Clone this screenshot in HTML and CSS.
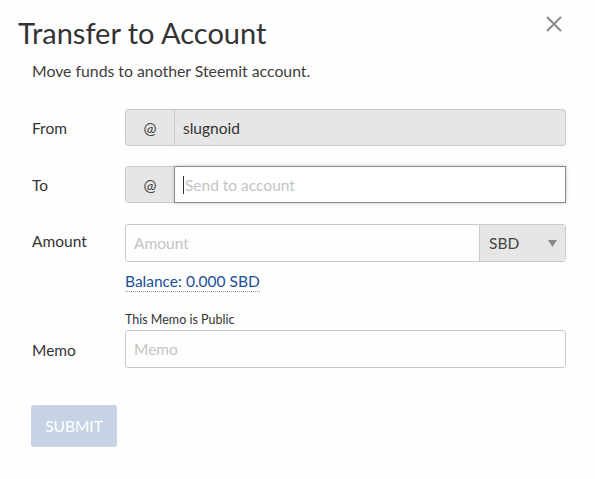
FILE: index.html
```html
<!DOCTYPE html>
<html>
<head>
<meta charset="utf-8">
<link rel="stylesheet" href="styles.css">
</head>
<body>
<div class="modal">
  <button class="close" aria-label="Close">
    <svg width="16" height="16" viewBox="0 0 16 16"><path d="M1 1 L15 15 M15 1 L1 15" stroke="#8a8a8a" stroke-width="2" fill="none"/></svg>
  </button>
  <h1 class="title">Transfer to Account</h1>
  <p class="subtitle">Move funds to another Steemit account.</p>
  <form class="form">
    <div class="row">
      <label class="label">From</label>
      <div class="group disabled">
        <span class="addon">@</span>
        <span class="field value">slugnoid</span>
      </div>
    </div>
    <div class="row">
      <label class="label">To</label>
      <div class="group">
        <span class="addon">@</span>
        <span class="field focus"><span class="caret"></span><span class="ph">Send to account</span></span>
      </div>
    </div>
    <div class="row row-amount">
      <label class="label">Amount</label>
      <div class="col">
        <div class="group tall">
          <span class="field plain"><span class="ph">Amount</span></span>
          <span class="select">SBD<svg width="9" height="7" viewBox="0 0 9 7"><path d="M0 0 H9 L4.5 7 Z" fill="#8a8a8a"/></svg></span>
        </div>
        <a class="balance">Balance: 0.000 SBD</a>
      </div>
    </div>
    <div class="row row-memo">
      <label class="label">Memo</label>
      <div class="col">
        <div class="note">This Memo is Public</div>
        <div class="group tall">
          <span class="field plain"><span class="ph">Memo</span></span>
        </div>
      </div>
    </div>
    <div class="actions">
      <span class="submit">SUBMIT</span>
    </div>
  </form>
</div>
</body>
</html>
```
FILE: styles.css
```css
* { box-sizing: border-box; }
html, body { margin: 0; padding: 0; background: #fefefe; }
body { font-family: "Lato", "Open Sans", sans-serif; color: #333; }
.modal { position: relative; width: 595px; height: 479px; padding: 14px 29px 0 18px; }
.close { position: absolute; top: 16px; left: 546px; width: 16px; height: 16px; padding: 0; border: 0; background: none; }
.close svg { display: block; }
.title { margin: 0; font-size: 29px; font-weight: 400; line-height: 38px; color: #333; }
.subtitle { margin: 10px 0 0 14px; font-size: 15.8px; line-height: 18px; color: #3d3d3d; }
.form { margin: 29px 0 0 14px; }
.row { display: flex; align-items: center; margin-bottom: 20px; }
.label { width: 93px; flex: none; font-size: 15.5px; color: #333; }
.group { flex: 1; display: flex; height: 37px; border: 1px solid #cacaca; border-radius: 3px; background: #fefefe; }
.col .group { flex: none; }
.group.tall { height: 38px; }
.group.disabled { background: #e6e6e6; }
.addon { width: 49px; flex: none; display: flex; align-items: center; justify-content: center; background: #e6e6e6; border-right: 1px solid #cacaca; font-size: 15.5px; color: #444; border-radius: 3px 0 0 3px; }
.field { flex: 1; display: flex; align-items: center; padding-left: 8px; font-size: 15.5px; }
.value { color: #333; }
.field.focus { border: 1px solid #8a8a8a; margin: -1px; background: #fff; box-shadow: 0 0 4px #cacaca; }
.caret { width: 1px; height: 18px; background: #333; margin-right: 1px; }
.ph { color: #c4c4c4; }
.row-amount { align-items: flex-start; margin-top: 21px; margin-bottom: 0; }
.row-amount .label { padding-top: 8px; }
.col { flex: 1; display: flex; flex-direction: column; }
.select { width: 86px; flex: none; display: flex; align-items: center; justify-content: space-between; padding: 0 8px 0 9px; background: #e6e6e6; border-left: 1px solid #cacaca; font-size: 15.5px; color: #444; }
.balance { align-self: flex-start; margin-top: 10px; font-size: 15.5px; line-height: 18px; color: #1a5099; border-bottom: 1px dotted #999; padding-bottom: 1px; }
.row-memo { align-items: flex-end; margin-top: 20px; margin-bottom: 0; }
.row-memo .label { padding-bottom: 9px; }
.note { font-size: 12.5px; color: #333; line-height: 15px; margin-bottom: 3px; }
.actions { margin-top: 37px; margin-left: -1px; }
.submit { display: inline-flex; align-items: center; justify-content: center; width: 86px; height: 42px; background: #c5d3e4; color: #fff; font-size: 15.5px; border-radius: 3px; }
```
